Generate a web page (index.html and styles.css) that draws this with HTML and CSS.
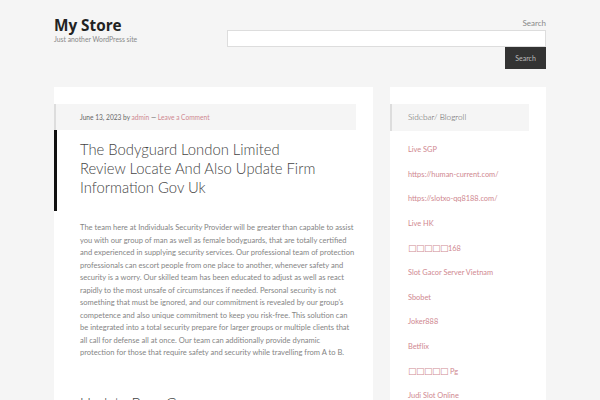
FILE: index.html
```html
<!DOCTYPE html>
<html>
<head>
<meta charset="utf-8">
<link rel="stylesheet" href="styles.css">
</head>
<body>
<header class="site-header">
  <div class="title-area">
    <p class="site-title">My Store</p>
    <p class="site-description">Just another WordPress site</p>
  </div>
  <div class="header-search">
    <label class="search-label">Search</label>
    <div class="search-input"></div>
    <div class="search-row"><span class="search-btn">Search</span></div>
  </div>
</header>
<div class="wrap">
  <main class="content">
    <div class="entry-meta">June 13, 2023 by <a>admin</a> — <a>Leave a Comment</a></div>
    <h1 class="entry-title">The Bodyguard London Limited<br>Review Locate And Also Update Firm<br>Information Gov Uk</h1>
    <p class="entry-text">The team here at Individuals Security Provider will be greater than capable to assist you with our group of man as well as female bodyguards, that are totally certified and experienced in supplying security services. Our professional team of protection professionals can escort people from one place to another, whenever safety and security is a worry. Our skilled team has been educated to adjust as well as react rapidly to the most unsafe of circumstances if needed. Personal security is not something that must be ignored, and our commitment is revealed by our group’s competence and also unique commitment to keep you risk-free. This solution can be integrated into a total security prepare for larger groups or multiple clients that all call for defense all at once. Our team can additionally provide dynamic protection for those that require safety and security while travelling from A to B.</p>
    <h2 class="sub-title">Update Bory Gov</h2>
  </main>
  <aside class="sidebar">
    <h3 class="widget-title">Sidebar/ Blogroll</h3>
    <ul class="links">
      <li><a>Live SGP</a></li>
      <li><a>https://human-current.com/</a></li>
      <li><a>https://slotxo-qq8188.com/</a></li>
      <li><a>Live HK</a></li>
      <li><a><span class="tofu">□□□□□</span>168</a></li>
      <li><a>Slot Gacor Server Vietnam</a></li>
      <li><a>Sbobet</a></li>
      <li><a>Joker888</a></li>
      <li><a>Betflix</a></li>
      <li><a><span class="tofu">□□□□□</span> Pg</a></li>
      <li><a>Judi Slot Online</a></li>
    </ul>
  </aside>
</div>
</body>
</html>
```
FILE: styles.css
```css
* { box-sizing: border-box; }
html, body { margin: 0; padding: 0; }
body {
  background: #f5f5f5;
  font-family: Lato, "Liberation Sans", sans-serif;
  color: #333;
  width: 600px;
  height: 400px;
  overflow: hidden;
}
p, h1, h2, h3, ul { margin: 0; padding: 0; }
a { color: #cf8890; text-decoration: none; }

.site-header {
  display: flex;
  justify-content: space-between;
  padding: 15px 54px 0 54px;
  height: 87px;
}
.site-title {
  font-family: "Open Sans", sans-serif;
  font-weight: 700;
  font-size: 15.3px;
  line-height: 20px;
  color: #222;
}
.site-description {
  font-size: 6.8px;
  line-height: 8px;
  color: #888;
  margin-top: 0;
}
.header-search {
  width: 319px;
  display: flex;
  flex-direction: column;
  align-items: flex-end;
}
.search-label {
  font-size: 8px;
  line-height: 10px;
  color: #888;
  margin: 3px 0 2px;
}
.search-input {
  width: 100%;
  height: 17px;
  background: #fff;
  border: 1px solid #ddd;
}
.search-row { display: flex; justify-content: flex-end; }
.search-btn {
  display: block;
  width: 41px;
  height: 22px;
  background: #333;
  color: #bbb;
  font-size: 7px;
  line-height: 22px;
  text-align: center;
}

.wrap {
  display: flex;
  gap: 17px;
  padding: 0 54px;
}
.content {
  width: 319px;
  height: 330px;
  background: #fff;
  padding: 17px 17px 0 0;
}
.entry-meta {
  background: #f5f5f5;
  border-left: 2px solid #ddd;
  height: 26px;
  line-height: 26px;
  padding-left: 24px;
  font-size: 6.6px;
  color: #666;
}
.entry-title {
  border-left: 3px solid #111;
  padding: 10px 0 14px 23px;
  font-weight: 300;
  font-size: 14.8px;
  line-height: 19px;
  color: #444;
}
.entry-text {
  padding: 11px 0 0 26px;
  font-size: 7.55px;
  line-height: 12.5px;
  color: #858585;
}
.sub-title {
  padding: 34px 0 0 26px;
  font-weight: 300;
  font-size: 15px;
  line-height: 19px;
  color: #444;
}

.sidebar {
  width: 156px;
  height: 330px;
  background: #fff;
  padding: 17px 17px 0 0;
}
.widget-title {
  background: #f5f5f5;
  border-left: 2px solid #ddd;
  height: 27px;
  line-height: 27px;
  padding-left: 16px;
  font-weight: 300;
  font-size: 8.2px;
  color: #555;
}
.links {
  list-style: none;
  padding: 13px 0 0 18px;
}
.links li {
  font-size: 7.4px;
  line-height: 12px;
  height: 24.6px;
}
.tofu {
  font-family: "DejaVu Sans", sans-serif;
  font-size: 9px;
  letter-spacing: -0.5px;
}
```
